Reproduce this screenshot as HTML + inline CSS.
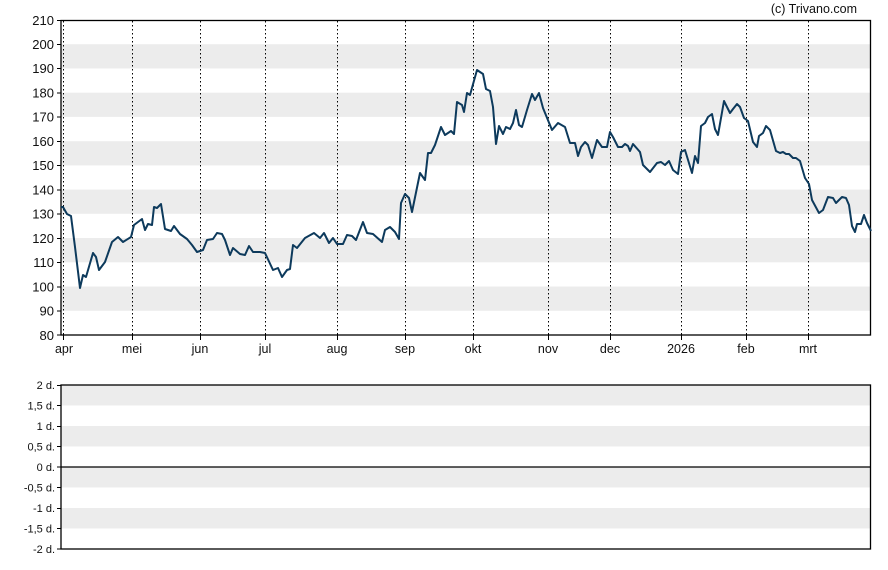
<!DOCTYPE html>
<html><head><meta charset="utf-8"><style>
html,body{margin:0;padding:0;background:#fff;}
svg text{font-family:"Liberation Sans",sans-serif;fill:#111;}
</style></head><body>
<svg width="888" height="565" viewBox="0 0 888 565" xmlns="http://www.w3.org/2000/svg">
<g fill="#ececec">
<rect x="61" y="44.2" width="810" height="24.3"/>
<rect x="61" y="92.7" width="810" height="24.2"/>
<rect x="61" y="141.2" width="810" height="24.2"/>
<rect x="61" y="189.6" width="810" height="24.2"/>
<rect x="61" y="238" width="810" height="24.3"/>
<rect x="61" y="286.5" width="810" height="24.3"/>
<rect x="61" y="385" width="810" height="20.5"/>
<rect x="61" y="426" width="810" height="20.5"/>
<rect x="61" y="467" width="810" height="20.5"/>
<rect x="61" y="508" width="810" height="20.5"/>
</g>
<g stroke="#000" stroke-width="1" stroke-dasharray="1.5,2.5">
<line x1="63.5" y1="21" x2="63.5" y2="335"/>
<line x1="132.5" y1="21" x2="132.5" y2="335"/>
<line x1="200.5" y1="21" x2="200.5" y2="335"/>
<line x1="265.5" y1="21" x2="265.5" y2="335"/>
<line x1="337.5" y1="21" x2="337.5" y2="335"/>
<line x1="405.5" y1="21" x2="405.5" y2="335"/>
<line x1="473.5" y1="21" x2="473.5" y2="335"/>
<line x1="548.5" y1="21" x2="548.5" y2="335"/>
<line x1="610.5" y1="21" x2="610.5" y2="335"/>
<line x1="681.5" y1="21" x2="681.5" y2="335"/>
<line x1="746.5" y1="21" x2="746.5" y2="335"/>
<line x1="808.5" y1="21" x2="808.5" y2="335"/>
</g>
<g fill="none" stroke="#000" stroke-width="1.3">
<rect x="61" y="20.5" width="809.5" height="314.5"/>
<rect x="61" y="385" width="809.5" height="164"/>
<line x1="61" y1="467" x2="870.5" y2="467"/>
</g>
<g stroke="#000" stroke-width="1">
<line x1="57" y1="20.5" x2="61" y2="20.5"/><line x1="57" y1="44.5" x2="61" y2="44.5"/><line x1="57" y1="68.5" x2="61" y2="68.5"/><line x1="57" y1="93" x2="61" y2="93"/><line x1="57" y1="117" x2="61" y2="117"/><line x1="57" y1="141.5" x2="61" y2="141.5"/><line x1="57" y1="165.5" x2="61" y2="165.5"/><line x1="57" y1="190" x2="61" y2="190"/><line x1="57" y1="214" x2="61" y2="214"/><line x1="57" y1="238.5" x2="61" y2="238.5"/><line x1="57" y1="262.5" x2="61" y2="262.5"/><line x1="57" y1="287" x2="61" y2="287"/><line x1="57" y1="311" x2="61" y2="311"/><line x1="57" y1="335" x2="61" y2="335"/>
<line x1="63.5" y1="335" x2="63.5" y2="340"/><line x1="132.5" y1="335" x2="132.5" y2="340"/><line x1="200.5" y1="335" x2="200.5" y2="340"/><line x1="265.5" y1="335" x2="265.5" y2="340"/><line x1="337.5" y1="335" x2="337.5" y2="340"/><line x1="405.5" y1="335" x2="405.5" y2="340"/><line x1="473.5" y1="335" x2="473.5" y2="340"/><line x1="548.5" y1="335" x2="548.5" y2="340"/><line x1="610.5" y1="335" x2="610.5" y2="340"/><line x1="681.5" y1="335" x2="681.5" y2="340"/><line x1="746.5" y1="335" x2="746.5" y2="340"/><line x1="808.5" y1="335" x2="808.5" y2="340"/>
<line x1="57" y1="385.5" x2="61" y2="385.5"/><line x1="57" y1="405.5" x2="61" y2="405.5"/><line x1="57" y1="426.5" x2="61" y2="426.5"/><line x1="57" y1="446.5" x2="61" y2="446.5"/><line x1="57" y1="467" x2="61" y2="467"/><line x1="57" y1="487.5" x2="61" y2="487.5"/><line x1="57" y1="508.5" x2="61" y2="508.5"/><line x1="57" y1="528.5" x2="61" y2="528.5"/><line x1="57" y1="549" x2="61" y2="549"/>
</g>
<g font-size="13" text-anchor="end">
<text x="54" y="25">210</text><text x="54" y="49">200</text><text x="54" y="73">190</text><text x="54" y="97.5">180</text><text x="54" y="121.5">170</text><text x="54" y="146">160</text><text x="54" y="170">150</text><text x="54" y="194.5">140</text><text x="54" y="218.5">130</text><text x="54" y="243">120</text><text x="54" y="267">110</text><text x="54" y="291.5">100</text><text x="54" y="315.5">90</text><text x="54" y="340">80</text>
</g>
<g font-size="11" text-anchor="end">
<text x="55" y="389">2 d.</text><text x="55" y="409.5">1,5 d.</text><text x="55" y="430">1 d.</text><text x="55" y="450.5">0,5 d.</text><text x="55" y="471">0 d.</text><text x="55" y="491.5">-0,5 d.</text><text x="55" y="512">-1 d.</text><text x="55" y="532.5">-1,5 d.</text><text x="55" y="553">-2 d.</text>
</g>
<g font-size="12.5" text-anchor="middle">
<text x="64" y="353">apr</text><text x="132" y="353">mei</text><text x="200" y="353">jun</text><text x="265" y="353">jul</text><text x="337" y="353">aug</text><text x="405" y="353">sep</text><text x="473" y="353">okt</text><text x="548" y="353">nov</text><text x="610" y="353">dec</text><text x="681" y="353">2026</text><text x="746" y="353">feb</text><text x="808" y="353">mrt</text>
</g>
<text x="857" y="13" font-size="12.5" text-anchor="end">(c) Trivano.com</text>
<polyline fill="none" stroke="#0d3a5c" stroke-width="2" stroke-linejoin="round" points="
61,207 63,207 67,214 71,216 75,247 80,288 83,275 86,277 93,253 96,257 99,270 105,262 112,242 118,237 123,242 131,237 134,225 142,219 145,230 148,224 152,225 154,207 157,208 161,204 165,229 171,231 174,226 180,234 187,239 192,245 197,252 203,250 207,240 213,239 217,233 222,234 225,240 230,255 233,248 240,254 245,255 249,246 253,252 260,252 265,253 273,270 278,268 282,277 287,270 290,269 293,245 297,248 305,238 314,233 320,238 324,233 329,243 333,238 337,244 343,244 347,235 352,236 356,240 363,222 367,233 373,234 382,242 385,230 390,227 395,232 399,239 401,203 405,194 409,198 412,212 420,173 425,180 428,153 431,153 435,145 441,127 445,135 451,131 454,134 457,102 462,105 464,112 467,93 470,95 477,70 483,74 486,89 490,91 493,107 496,144 499,126 503,134 506,127 510,129 513,123 516,110 519,125 522,127 527,110 532,94 535,100 539,93 543,108 552,130 558,123 565,127 570,143 575,143 578,156 581,147 585,142 588,145 592,158 597,140 602,147 607,147 610,132 613,137 618,147 622,147 625,144 628,146 630,151 633,144 640,152 643,165 650,172 657,163 661,162 665,165 669,161 673,170 678,174 681,152 685,150 692,173 695,156 698,163 701,126 705,123 708,117 712,114 715,129 718,135 724,101 730,113 733,109 737,104 740,107 744,118 748,121 753,142 757,147 759,136 763,133 766,126 770,130 776,151 780,153 783,152 786,154 789,154 793,158 796,158 800,161 805,178 809,184 812,200 819,213 823,210 828,197 833,198 836,203 842,197 846,198 849,205 852,226 855,232 857,224 861,224 864,215 867,223 871,231"/>
</svg>
</body></html>
